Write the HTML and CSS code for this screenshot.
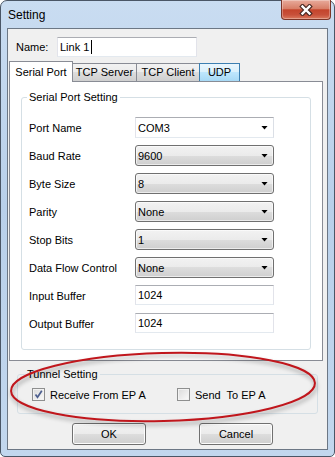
FILE: index.html
```html
<!DOCTYPE html>
<html lang="en">
  <head>
    <meta charset="UTF-8" />
    <meta name="viewport" content="width=device-width, initial-scale=1.0" />
    <title>Setting</title>
    <link rel="stylesheet" href="styles.css">
  </head>
  <body>
    <div class="window">
      <div class="titlebar">
        <span class="title">Setting</span>
        <div class="close-btn">
          <svg width="14" height="12" viewBox="0 0 14 12">
            <path d="M3.5 2.5 L10.5 9.5 M10.5 2.5 L3.5 9.5" stroke="#4a2a24" stroke-width="4.6" stroke-linecap="square" fill="none" />
            <path d="M3.5 2.5 L10.5 9.5 M10.5 2.5 L3.5 9.5" stroke="#fff" stroke-width="2.4" stroke-linecap="square" fill="none" />
          </svg>
        </div>
      </div>
      <div class="client">
        <div class="name-row">
          <label>Name:</label>
          <div class="textbox name-box">Link 1<span class="caret"></span></div>
        </div>
        <div class="tabs">
          <div class="tab active w-serial">Serial Port</div>
          <div class="tab w-server">TCP Server</div>
          <div class="tab w-client">TCP Client</div>
          <div class="tab hover w-udp">UDP</div>
        </div>
        <div class="tab-page">
          <fieldset class="group serial-group">
            <legend>Serial Port Setting</legend>
            <div class="form-grid">
              <label>Port Name</label>
              <div class="combo edit"><span>COM3</span><span class="arrow"></span></div>
              <label>Baud Rate</label>
              <div class="combo"><span>9600</span><span class="arrow"></span></div>
              <label>Byte Size</label>
              <div class="combo"><span>8</span><span class="arrow"></span></div>
              <label>Parity</label>
              <div class="combo"><span>None</span><span class="arrow"></span></div>
              <label>Stop Bits</label>
              <div class="combo"><span>1</span><span class="arrow"></span></div>
              <label>Data Flow Control</label>
              <div class="combo"><span>None</span><span class="arrow"></span></div>
              <label>Input Buffer</label>
              <div class="textbox field">1024</div>
              <label>Output Buffer</label>
              <div class="textbox field">1024</div>
            </div>
          </fieldset>
        </div>
        <fieldset class="group tunnel-group">
          <legend>Tunnel Setting</legend>
          <div class="check-row">
            <div class="check">
              <span class="box">
                <svg width="11" height="11" viewBox="0 0 11 11">
                  <path d="M2.5 5.5 L4.5 8.3 L8.8 1.8" stroke="#4d5f8f" stroke-width="1.7" fill="none" />
                </svg>
              </span>
              <span>Receive From EP A</span>
            </div>
            <div class="check">
              <span class="box"></span>
              <span>Send&nbsp; To EP A</span>
            </div>
          </div>
        </fieldset>
        <div class="buttons">
          <div class="btn">OK</div>
          <div class="btn">Cancel</div>
        </div>
      </div>
      <svg class="mark" width="335" height="457" viewBox="0 0 335 457">
        <ellipse cx="163" cy="387" rx="152" ry="34" transform="rotate(-1.5 163 387)" fill="none" stroke="#c0161c" stroke-width="2" />
      </svg>
    </div>
  </body>
</html>
```

FILE: styles.css
```css
body {
  margin: 0;
  background: #fff;
  font-family: "Liberation Sans", Arial, sans-serif;
  font-size: 11px;
  color: #000;
}
.window {
  position: relative;
  width: 335px;
  height: 457px;
  box-sizing: border-box;
  border: 1px solid #4a5666;
  border-radius: 7px 7px 5px 5px;
  background: linear-gradient(to bottom, #c9dcf1 0%, #b9d0ea 45%, #c2d7ee 100%);
  padding: 0 6px 6px;
  display: flex;
  flex-direction: column;
}
.titlebar {
  display: flex;
  justify-content: space-between;
  align-items: flex-start;
  height: 27px;
  margin: 0 -6px;
  padding: 0 3px 0 7px;
}
.title {
  font-size: 12px;
  line-height: 15px;
  padding-top: 7px;
}
.close-btn {
  width: 48px;
  height: 19px;
  margin-top: -1px;
  border: 1px solid #7c3528;
  border-top: none;
  border-radius: 0 0 4px 4px;
  background: linear-gradient(to bottom, #e8ab9c 0%, #d87f68 45%, #c4442c 52%, #c8503a 78%, #da7a5e 100%);
  box-shadow: inset 0 0 0 1px rgba(255, 255, 255, 0.3);
  display: flex;
  align-items: center;
  justify-content: center;
}
.client {
  flex: 1;
  border: 1px solid #6c7785;
  background: #f0f0f0;
  display: flex;
  flex-direction: column;
}
.name-row {
  display: flex;
  align-items: center;
  margin-top: 8px;
  padding-left: 8px;
}
.name-row label {
  width: 41px;
}
.textbox {
  box-sizing: border-box;
  height: 20px;
  background: #fff;
  border: 1px solid;
  border-color: #abadb3 #e2e3ea #e3e9ef #e2e3ea;
  padding: 0 2px;
  line-height: 18px;
  display: flex;
  align-items: center;
}
.name-box {
  width: 140px;
}
.caret {
  display: inline-block;
  width: 1px;
  height: 14px;
  margin-left: 2px;
  background: #000;
}
.tabs {
  display: flex;
  align-items: flex-end;
  height: 20px;
  margin-top: 4px;
  padding-left: 1px;
}
.tab {
  box-sizing: border-box;
  height: 18px;
  border: 1px solid #898c95;
  border-bottom: none;
  margin-left: -1px;
  text-align: center;
  line-height: 17px;
  background: linear-gradient(#f2f2f2, #ebebeb 50%, #dddddd 50%, #cfcfcf);
}
.tab.active {
  margin-left: 0;
  height: 21px;
  margin-bottom: -1px;
  line-height: 20px;
  background: #fff;
  position: relative;
  z-index: 1;
}
.tab.hover {
  background: linear-gradient(#eaf6fd, #d9f0fc 50%, #bee6fd 50%, #a7d9f5);
  border-color: #3c7fb1;
  position: relative;
}
.w-serial { width: 64px; }
.w-server { width: 65px; }
.w-client { width: 64px; }
.w-udp { width: 41px; }
.tab-page {
  border: 1px solid #898c95;
  background: #fff;
  margin: 0 4px 0 1px;
  padding: 9px 11px 10px;
}
.group {
  margin: 0;
  border: 1px solid #d5dfe5;
  border-radius: 3px;
  min-width: 0;
}
.group legend {
  padding: 0 2px;
  line-height: 13px;
}
.serial-group {
  padding: 13px 0 15px 7px;
}
.serial-group legend {
  margin-left: -2px;
}
.form-grid {
  display: grid;
  grid-template-columns: 106px 139px;
  grid-auto-rows: 21px;
  row-gap: 7px;
  align-items: center;
}
.combo {
  box-sizing: border-box;
  height: 21px;
  border: 1px solid #707070;
  border-radius: 3px;
  background: linear-gradient(#f2f2f2, #ebebeb 50%, #dddddd 50%, #cfcfcf);
  box-shadow: inset 0 0 0 1px rgba(255, 255, 255, 0.6);
  display: flex;
  align-items: center;
  justify-content: space-between;
  padding: 0 5px 0 2px;
}
.combo.edit {
  background: #fff;
  border-color: #abadb3 #dbdfe6 #e3e9ef #e2e3ea;
  border-radius: 0;
  box-shadow: none;
}
.arrow {
  width: 7px;
  height: 4px;
  background: #000;
  clip-path: polygon(0 0, 100% 0, 50% 100%);
}
.field {
  align-self: start;
}
.tunnel-group {
  margin: 7px 9px 0;
  padding: 7px 0 12px 14px;
}
.tunnel-group legend {
  margin-left: -7px;
}
.check-row {
  display: grid;
  grid-template-columns: 145px auto;
  height: 13px;
}
.check {
  display: flex;
  align-items: center;
  gap: 5px;
}
.box {
  width: 13px;
  height: 13px;
  box-sizing: border-box;
  border: 1px solid #8e8f8f;
  background: linear-gradient(135deg, #dadada, #fbfbfb);
  box-shadow: inset 0 0 0 1px #f2f2f2;
  display: flex;
  align-items: center;
  justify-content: center;
}
.buttons {
  display: flex;
  gap: 53px;
  padding-left: 64px;
  margin-top: 9px;
}
.btn {
  box-sizing: border-box;
  width: 74px;
  height: 22px;
  border: 1px solid #707070;
  border-radius: 3px;
  background: linear-gradient(#f2f2f2, #ebebeb 50%, #dddddd 50%, #cfcfcf);
  box-shadow: inset 0 0 0 1px #fcfcfc;
  display: flex;
  align-items: center;
  justify-content: center;
}
.mark {
  position: absolute;
  left: -1px;
  top: -1px;
  pointer-events: none;
  filter: drop-shadow(1px 3px 2px rgba(0, 0, 0, 0.35));
}
```
